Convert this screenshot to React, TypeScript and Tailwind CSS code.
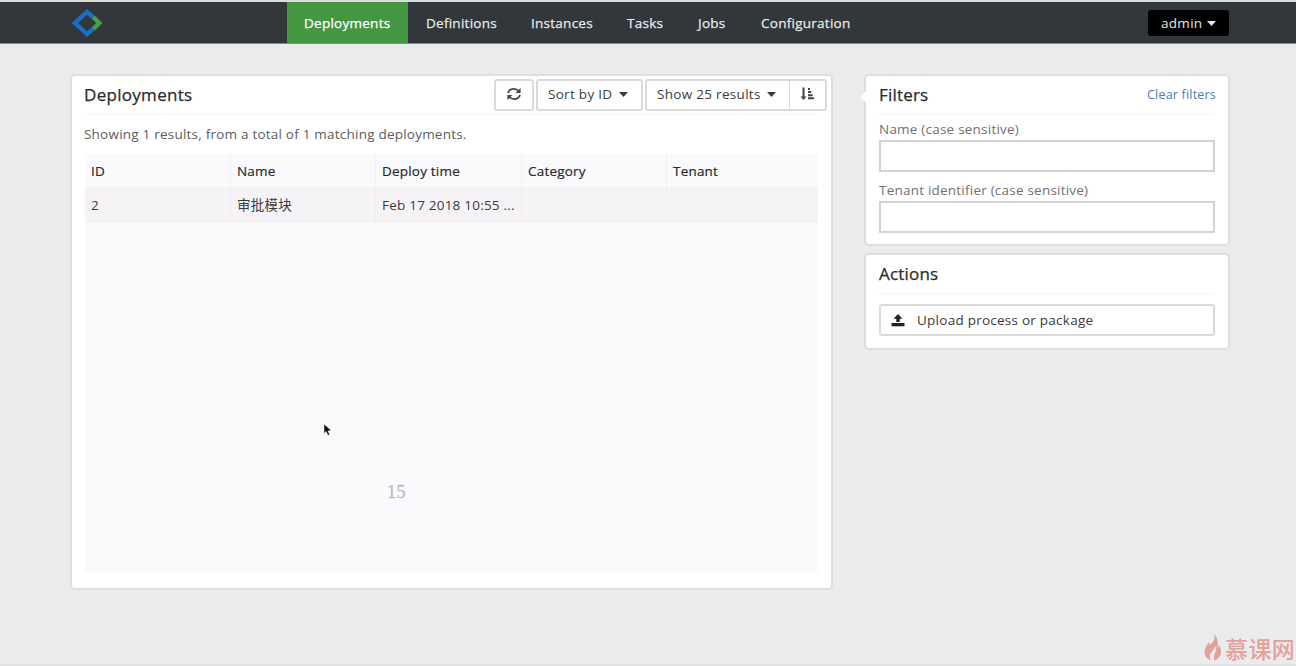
import React from 'react';

const navItems = [
  { label: 'Deployments', cls: 'w-[121px] pl-[17px] bg-[#459641] text-white' },
  { label: 'Definitions', cls: 'w-[106px] pl-[18px]' },
  { label: 'Instances', cls: 'w-[96px] pl-[17px]' },
  { label: 'Tasks', cls: 'w-[71px] pl-[17px]' },
  { label: 'Jobs', cls: 'w-[63px] pl-[17px]' },
  { label: 'Configuration', cls: 'w-[124px] pl-[17px]' },
];

const columns = ['ID', 'Name', 'Deploy time', 'Category', 'Tenant'];
const row = ['2', '审批模块', 'Feb 17 2018 10:55 ...', '', ''];

function Caret({ className = '' }: { className?: string }) {
  return (
    <svg className={className} width="9" height="5" viewBox="0 0 9 5" fill="currentColor">
      <path d="M0 0h9L4.5 5z" />
    </svg>
  );
}

function Logo() {
  return (
    <svg width="32" height="28" viewBox="0 0 32 28" fill="none" strokeWidth="4.4">
      <path d="M22.300 8.400L16 2.900 4 14l12 11.100 6.300-5.500" stroke="#1b6ec2" />
      <path d="M22.300 8.200l6 5.800-6 5.800" stroke="#46a046" />
    </svg>
  );
}

function RefreshIcon() {
  return (
    <svg width="16" height="14" viewBox="0 0 16 14" fill="none" stroke="#444" strokeWidth="1.8">
      <path d="M2 6C2.800 3.400 5 1.900 7.800 1.900c2.200 0 3.900.9 5 2.400" />
      <path d="M14 8c-.8 2.600-3 4.100-5.800 4.100-2.200 0-3.900-.9-5-2.400" />
      <path d="M14.600 1v5H9.600z M1.400 13V8h5z" fill="#444" stroke="none" />
    </svg>
  );
}

function SortIcon() {
  return (
    <svg width="16" height="14" viewBox="0 0 16 14" fill="#444">
      <path d="M2.500 0.500h2v9h2L3.500 13 0.500 9.500h2z" />
      <path d="M8 1h2v2H8zM8 4.100h3.300v2H8zM8 7.200h4.600v2H8zM8 10.300h6v2H8z" />
    </svg>
  );
}

function UploadIcon() {
  return (
    <svg width="14" height="13" viewBox="0 0 14 13" fill="#222">
      <path d="M7 0l4.500 4.800H8.700V8H5.300V4.800H2.500z" />
      <path d="M0.500 9h13v3.300h-13z" />
    </svg>
  );
}

function Field({ label }: { label: string }) {
  return (
    <label className="block">
      <span className="block h-[22px] leading-[22px] tracking-[0.22px] text-[#707173]">{label}</span>
      <input className="block h-8 w-full border-2 border-[#d3d3d3] bg-white px-2 outline-none" />
    </label>
  );
}

export default function App() {
  return (
    <div className="relative h-[666px] w-[1296px] overflow-hidden bg-[#e9ebed] font-['Open_Sans','Noto_Sans_CJK_SC',sans-serif] text-[13.5px] text-[#3c3c3c]">
      <header className="flex h-[44px] items-stretch border-t-2 border-b border-t-[#d9dbdc] border-b-[#85898b] bg-[#31373b]">
        <div className="flex w-[287px] items-center pt-px pl-[71px]">
          <Logo />
        </div>
        <nav className="flex text-[#e8e8e8] [-webkit-text-stroke:0.25px]">
          {navItems.map((item) => (
            <a key={item.label} className={`flex items-center pt-[2px] tracking-[0.26px] ${item.cls}`}>
              {item.label}
            </a>
          ))}
        </nav>
        <button className="mt-2 mr-[67px] ml-auto flex h-[26px] w-[81px] items-center rounded-[3px] bg-black pt-px pl-[13px] tracking-[0.3px] text-[#e6e6e6]">
          admin
          <Caret className="ml-[5px]" />
        </button>
      </header>

      <main className="flex items-start pt-[30px] pl-[70px]">
        <section className="h-[516px] w-[763px] rounded-[5px] border-2 border-[#dcdee0] bg-white px-[13px]">
          <div className="flex h-[39px] items-start border-b border-[#f5f5f5]">
            <h1 className="-ml-px pt-[7px] text-[17px] leading-6 tracking-[0.3px] text-[#2b2b2b] [-webkit-text-stroke:0.25px]">Deployments</h1>
            <div className="mt-[3px] mr-[-9px] ml-auto flex gap-[2px] tracking-[0.3px]">
              <button className="flex h-8 w-10 items-center justify-center rounded-[3px] border-2 border-[#dadada] pb-[2px]">
                <RefreshIcon />
              </button>
              <button className="flex h-8 w-[107px] items-center rounded-[3px] border-2 border-[#dadada] pb-px pl-[10px]">
                Sort by ID
                <Caret className="ml-[7px]" />
              </button>
              <div className="flex">
                <button className="flex h-8 w-[144px] items-center rounded-l-[3px] border-2 border-r-0 border-[#dadada] pb-px pl-[10px]">
                  Show 25 results
                  <Caret className="ml-[6px]" />
                </button>
                <button className="flex h-8 w-[38px] items-center justify-center rounded-r-[3px] border-2 border-l border-[#dadada] pb-[3px]">
                  <SortIcon />
                </button>
              </div>
            </div>
          </div>
          <p className="-ml-px h-[39px] pt-[9px] leading-5 tracking-[0.22px] text-[#5c5d5f]">
            Showing 1 results, from a total of 1 matching deployments.
          </p>
          <div className="h-[418px] w-[733px] bg-[#fafafc]">
            <div className="grid h-[33px] grid-cols-[146px_145px_146px_145px_151px]">
              {columns.map((name) => (
                <div key={name} className="flex items-center border-r border-[#f1f1f3] pt-[2px] pl-[6px] tracking-[0.2px] text-[#2b2b2b] [-webkit-text-stroke:0.2px] last:border-r-0">
                  {name}
                </div>
              ))}
            </div>
            <div className="grid h-9 grid-cols-[146px_145px_146px_145px_151px] bg-[#f5f3f6]">
              {row.map((value, i) => (
                <div key={i} className="flex items-center border-r border-[#efeef1] pt-px pl-[6px] tracking-[0.22px] whitespace-nowrap last:border-r-0">
                  {value}
                </div>
              ))}
            </div>
          </div>
        </section>

        <aside className="ml-[31px] flex w-[366px] flex-col gap-[7px]">
          <section className="relative h-[172px] rounded-[5px] border-2 border-[#dcdee0] bg-white px-[13px]">
            <svg className="absolute top-[14px] left-[-7px]" width="8" height="14" viewBox="0 0 8 14">
              <path d="M8 0L1 7l7 7z" fill="#fff" />
            </svg>
            <div className="flex h-[39px] items-center justify-between border-b border-[#f5f5f5]">
              <h2 className="text-[17px] tracking-[0.2px] text-[#2b2b2b] [-webkit-text-stroke:0.25px]">Filters</h2>
              <a className="mr-[-1px] text-[12.5px] tracking-[0.2px] text-[#4a7db8]">Clear filters</a>
            </div>
            <div className="flex flex-col gap-[7px] pt-[3px]">
              <Field label="Name (case sensitive)" />
              <Field label="Tenant identifier (case sensitive)" />
            </div>
          </section>
          <section className="h-[97px] rounded-[5px] border-2 border-[#dcdee0] bg-white px-[13px]">
            <div className="flex h-[39px] items-center border-b border-[#f5f5f5]">
              <h2 className="text-[17px] tracking-[0.2px] text-[#2b2b2b] [-webkit-text-stroke:0.25px]">Actions</h2>
            </div>
            <button className="mt-[10px] flex h-8 w-full items-center rounded-[3px] border-2 border-[#dadada] pl-[10px] tracking-[0.25px]">
              <UploadIcon />
              <span className="ml-3">Upload process or package</span>
            </button>
          </section>
        </aside>
      </main>

      <svg className="absolute top-[423px] left-[323px]" width="10" height="14" viewBox="0 0 10 14">
        <path d="M1 1v9.500l2.200-1.900 1.700 3.800 1.800-.8-1.700-3.700 3.300-.3z" fill="#111" stroke="#fff" strokeWidth=".5" />
      </svg>
      <span className="absolute top-[480px] left-[387px] font-['Liberation_Serif',serif] text-[18px] leading-6 tracking-[0.5px] text-[#bdbdbf] [-webkit-text-stroke:0.3px]">15</span>

      <div className="absolute top-[634px] left-[1204px] flex items-center text-[#e5a09c]">
        <svg width="18" height="28" viewBox="0 0 18 28" fill="currentColor">
          <path d="M10 0c2 5-1 8-4 11-.8-1-1-2-1-3-2 3-4.500 6-4.500 10 0 4 2.500 7 6.500 8-2-3-1.500-6 1-8.500C9.500 16 11 14 11 12c2.500 3 .5 6-.5 8-1 2.500-1 4.500 0 6.500 4-1.500 6.500-4.500 6.500-8.500 0-3-.5-5-2-7 0 1-.5 2-1.500 3C14.500 8 13.500 3 10 0z" />
        </svg>
        <span className="ml-[3px] font-['Noto_Sans_CJK_SC',sans-serif] text-[23px] leading-7 font-medium tracking-[0.4px] whitespace-nowrap">慕课网</span>
      </div>
      <div className="absolute bottom-0 left-0 h-[2px] w-full bg-[#dfe1e2]" />
    </div>
  );
}
